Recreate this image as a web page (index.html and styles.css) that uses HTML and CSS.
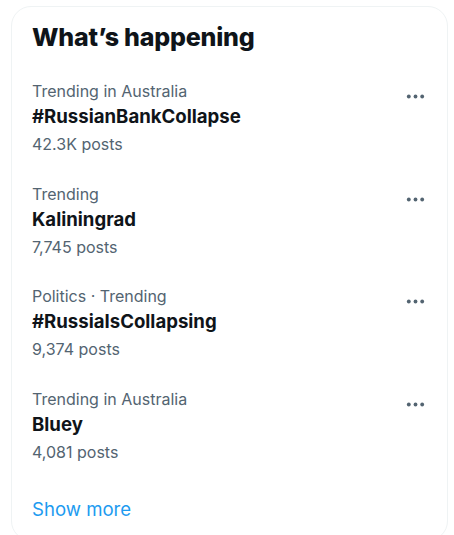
FILE: index.html
```html
<!DOCTYPE html>
<html lang="en">
<head>
<meta charset="utf-8">
<title>What's happening</title>
<link rel="stylesheet" href="styles.css">
</head>
<body>
<aside class="card">
  <h2 class="card-title">What’s happening</h2>
  <div class="trend">
    <div class="trend-text">
      <div class="trend-meta">Trending in Australia</div>
      <div class="trend-name">#RussianBankCollapse</div>
      <div class="trend-count">42.3K posts</div>
    </div>
    <svg class="more" viewBox="0 0 24 24" aria-hidden="true"><circle cx="5" cy="12" r="2"/><circle cx="12" cy="12" r="2"/><circle cx="19" cy="12" r="2"/></svg>
  </div>
  <div class="trend">
    <div class="trend-text">
      <div class="trend-meta">Trending</div>
      <div class="trend-name">Kaliningrad</div>
      <div class="trend-count">7,745 posts</div>
    </div>
    <svg class="more" viewBox="0 0 24 24" aria-hidden="true"><circle cx="5" cy="12" r="2"/><circle cx="12" cy="12" r="2"/><circle cx="19" cy="12" r="2"/></svg>
  </div>
  <div class="trend">
    <div class="trend-text">
      <div class="trend-meta">Politics · Trending</div>
      <div class="trend-name">#RussiaIsCollapsing</div>
      <div class="trend-count">9,374 posts</div>
    </div>
    <svg class="more" viewBox="0 0 24 24" aria-hidden="true"><circle cx="5" cy="12" r="2"/><circle cx="12" cy="12" r="2"/><circle cx="19" cy="12" r="2"/></svg>
  </div>
  <div class="trend">
    <div class="trend-text">
      <div class="trend-meta">Trending in Australia</div>
      <div class="trend-name">Bluey</div>
      <div class="trend-count">4,081 posts</div>
    </div>
    <svg class="more" viewBox="0 0 24 24" aria-hidden="true"><circle cx="5" cy="12" r="2"/><circle cx="12" cy="12" r="2"/><circle cx="19" cy="12" r="2"/></svg>
  </div>
  <a class="show-more" href="#">Show more</a>
</aside>
</body>
</html>
```
FILE: styles.css
```css
html, body {
  margin: 0;
  padding: 0;
  background: #ffffff;
}
body {
  font-family: Inter, "Liberation Sans", Arial, sans-serif;
  color: #0f1419;
  padding: 6px 6px 0 11px;
}
.card {
  width: 435px;
  border: 1px solid #eff3f4;
  border-radius: 20px;
  display: flex;
  flex-direction: column;
}
.card-title {
  margin: 0;
  padding: 15px 20px 29px;
  font-size: 25px;
  line-height: 30px;
  font-weight: 800;
  letter-spacing: -0.2px;
}
.trend {
  display: flex;
  justify-content: space-between;
  align-items: flex-start;
  padding: 0 20px 29.7px;
}
.trend-text {
  display: flex;
  flex-direction: column;
}
.trend-meta, .trend-count {
  font-size: 16px;
  line-height: 20px;
  color: #536471;
}
.trend-name {
  font-size: 18.6px;
  line-height: 25px;
  font-weight: 700;
  padding-top: 3px;
}
.trend-count {
  margin-top: 5px;
}
.more {
  width: 23px;
  height: 23px;
  fill: #536471;
  margin-top: 4px;
}
.show-more {
  display: block;
  padding: 5px 20px 18px;
  font-size: 18.6px;
  line-height: 25px;
  color: #1d9bf0;
  text-decoration: none;
}
```
